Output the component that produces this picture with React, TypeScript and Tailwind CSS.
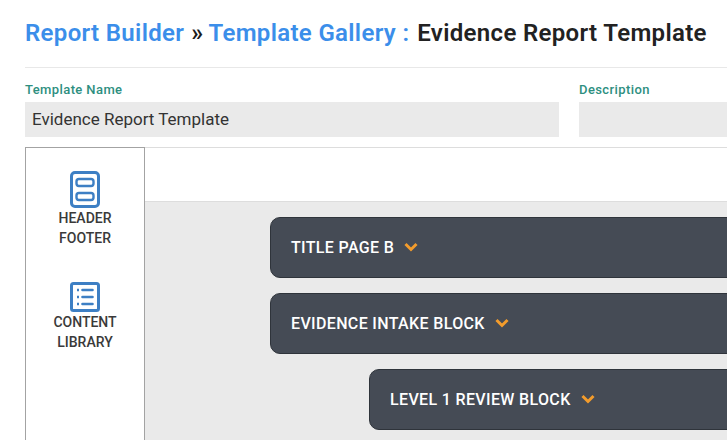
import type { FC } from "react";

const Chevron: FC = () => (
  <svg viewBox="0 0 14 10" className="-mt-px h-[10px] w-[14px]" fill="none">
    <path d="M1.5 2 7 7.5 12.5 2" stroke="#f39c2c" strokeWidth="3" />
  </svg>
);

const HeaderFooterIcon: FC = () => (
  <svg viewBox="0 0 30 37" className="h-[37px] w-[30px]" fill="none" stroke="#3d7fc4">
    <rect x="1.5" y="1.5" width="27" height="34" rx="3.5" strokeWidth="3" />
    <rect x="6.5" y="8" width="17" height="7" rx="2.5" strokeWidth="2.4" />
    <rect x="6.5" y="22" width="17" height="7" rx="2.5" strokeWidth="2.4" />
  </svg>
);

const LibraryIcon: FC = () => (
  <svg viewBox="0 0 30 30" className="h-[30px] w-[30px]" fill="none" stroke="#3d7fc4">
    <rect x="1.5" y="1.5" width="27" height="27" rx="2" strokeWidth="3" />
    <path d="M12.5 8h10M12.5 15h10M12.5 22h10" strokeWidth="2.6" strokeLinecap="round" />
    <path d="M7 8h2M7 15h2M7 22h2" strokeWidth="2.4" />
  </svg>
);

const Block: FC<{ label: string; indent?: boolean }> = ({ label, indent }) => (
  <div
    className={`flex h-[61px] w-[640px] shrink-0 items-center gap-[10px] rounded-l-[10px] border border-[#2f343b] bg-[#454b55] pl-5 ${
      indent ? "ml-[224px]" : "ml-[125px]"
    }`}
  >
    <span className="text-[16px] font-medium tracking-[0.35px] text-white">{label}</span>
    <Chevron />
  </div>
);

const App: FC = () => {
  return (
    <div className="h-[440px] w-[727px] overflow-hidden bg-white font-['Roboto',sans-serif]">
      <div className="pl-[25px]">
        <h1 className="flex h-[68px] items-center whitespace-nowrap border-b border-[#e8e8e8] pb-[2px] text-[24px] font-semibold tracking-[0.33px]">
          <span className="text-[#3b8eea]">Report Builder</span>
          <span className="ml-[7px] text-[#1c1c1c]">»</span>
          <span className="ml-[5px] text-[#3b8eea]">Template Gallery :</span>
          <span className="ml-[8px] text-[#222222]">Evidence Report Template</span>
        </h1>
        <div className="flex gap-5 border-b border-[#dddddd] pt-[14px] pb-[10px]">
          <div className="w-[534px] shrink-0">
            <label className="block h-[20px] text-[13px] font-medium leading-[16px] tracking-[0.4px] text-[#2e8f7f]">
              Template Name
            </label>
            <div className="flex h-[35px] items-center bg-[#eaeaea] px-[7px] text-[17px] text-[#333333]">
              Evidence Report Template
            </div>
          </div>
          <div className="w-[300px] shrink-0">
            <label className="block h-[20px] text-[13px] font-medium leading-[16px] tracking-[0.4px] text-[#2e8f7f]">
              Description
            </label>
            <div className="h-[35px] bg-[#eaeaea]" />
          </div>
        </div>
      </div>
      <div className="flex h-[292px] pl-[25px]">
        <aside className="-mt-px flex w-[120px] shrink-0 flex-col items-center border-x border-t border-[#a3a3a3] pt-[23px] text-[14px] font-medium leading-[20px] text-[#3a3a3a]">
          <HeaderFooterIcon />
          <div className="text-center">
            HEADER
            <br />
            FOOTER
          </div>
          <div className="mt-[34px]">
            <LibraryIcon />
          </div>
          <div className="text-center">
            CONTENT
            <br />
            LIBRARY
          </div>
        </aside>
        <main className="flex min-w-0 flex-1 flex-col">
          <div className="h-[54px] shrink-0 border-b border-[#dddddd]" />
          <div className="flex flex-1 flex-col gap-[15px] overflow-hidden bg-[#eaeaea] pt-[15px]">
            <Block label="TITLE PAGE B" />
            <Block label="EVIDENCE INTAKE BLOCK" />
            <Block label="LEVEL 1 REVIEW BLOCK" indent />
          </div>
        </main>
      </div>
    </div>
  );
};

export default App;
